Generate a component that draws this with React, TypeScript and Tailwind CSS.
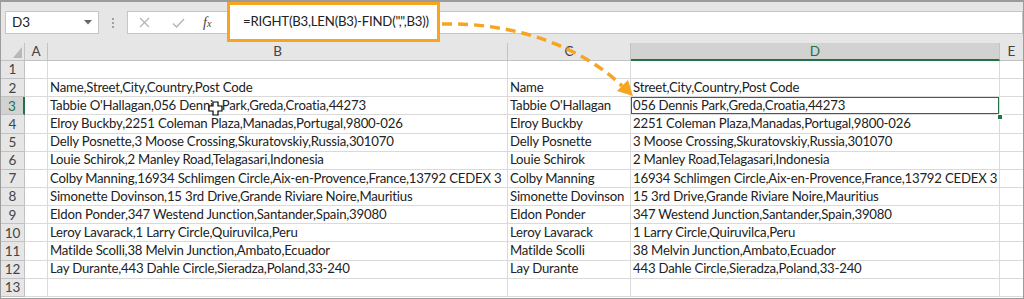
import React from "react";

const rows: string[] = [
  "",
  "Name,Street,City,Country,Post Code",
  "Tabbie O'Hallagan,056 Dennis Park,Greda,Croatia,44273",
  "Elroy Buckby,2251 Coleman Plaza,Manadas,Portugal,9800-026",
  "Delly Posnette,3 Moose Crossing,Skuratovskiy,Russia,301070",
  "Louie Schirok,2 Manley Road,Telagasari,Indonesia",
  "Colby Manning,16934 Schlimgen Circle,Aix-en-Provence,France,13792 CEDEX 3",
  "Simonette Dovinson,15 3rd Drive,Grande Riviare Noire,Mauritius",
  "Eldon Ponder,347 Westend Junction,Santander,Spain,39080",
  "Leroy Lavarack,1 Larry Circle,Quiruvilca,Peru",
  "Matilde Scolli,38 Melvin Junction,Ambato,Ecuador",
  "Lay Durante,443 Dahle Circle,Sieradza,Poland,33-240",
  "",
];

const splitFirst = (s: string) => {
  const i = s.indexOf(",");
  if (i < 0) return [s, ""];
  return [s.slice(0, i), s.slice(i + 1)];
};

const font = { fontFamily: "Lato, 'Open Sans', sans-serif" };

const Cursor = () => (
  <svg className="absolute left-[207px] top-[99px]" width="15" height="15" viewBox="0 0 15 15">
    <path
      d="M5 1h5v4h4v5h-4v4H5v-4H1V5h4z"
      fill="#fff"
      stroke="#000"
      strokeWidth="1.2"
    />
  </svg>
);

const Arrow = () => (
  <svg className="absolute left-0 top-0 pointer-events-none" width="1024" height="299">
    <path
      d="M441 22 C 515 20, 582 46, 621 84"
      fill="none"
      stroke="#f5a51f"
      strokeWidth="3.5"
      strokeDasharray="10 6"
    />
    <polygon points="632,94 616,89 627,78" fill="#f5a51f" />
  </svg>
);

const Toolbar = () => (
  <div className="h-[41px] bg-[#e6e6e6] flex items-center relative">
    {/* NAME BOX */}
    <div className="ml-[4px] w-[94px] h-[23px] bg-white border border-[#c6c6c6] flex items-center justify-between px-[6px]">
      <span className="text-[13.5px] text-[#222]">D3</span>
      <svg width="8" height="5" viewBox="0 0 8 5">
        <path d="M0 0h8L4 4.5z" fill="#666" />
      </svg>
    </div>
    {/* DOTS */}
    <div className="w-[28px] flex flex-col items-center gap-[2px]">
      <span className="w-[2px] h-[2px] bg-[#a0a0a0]" />
      <span className="w-[2px] h-[2px] bg-[#a0a0a0]" />
      <span className="w-[2px] h-[2px] bg-[#a0a0a0]" />
    </div>
    {/* FX GROUP */}
    <div className="w-[100px] h-[23px] bg-white border border-r-0 border-[#c6c6c6] flex items-center">
      <svg className="ml-[11px]" width="11" height="11" viewBox="0 0 11 11">
        <path d="M1 1l9 9M10 1l-9 9" stroke="#b4b4b4" strokeWidth="1.3" />
      </svg>
      <svg className="ml-[22px]" width="13" height="10" viewBox="0 0 13 10">
        <path d="M1 5.5l3.5 3.5L12 1" fill="none" stroke="#b4b4b4" strokeWidth="1.4" />
      </svg>
      <span
        className="ml-[18px] text-[14px] italic text-[#444]"
        style={{ fontFamily: "'Liberation Serif', serif" }}
      >
        f<span className="text-[10px]">x</span>
      </span>
    </div>
    {/* HIGHLIGHTED FORMULA */}
    <div className="w-[213px] h-[40px] self-start border-[3px] border-[#f5a51f] bg-white flex items-center pl-[13px]">
      <span className="text-[13.2px] tracking-[-0.2px] text-[#222] whitespace-nowrap">
        =RIGHT(B3,LEN(B3)-FIND(",",B3))
      </span>
    </div>
    <div className="flex-1 h-[23px] bg-white border border-l-0 border-[#c6c6c6]" />
  </div>
);

const HeaderRow = () => {
  const cols = [
    { l: "A", w: "w-[23px]" },
    { l: "B", w: "w-[460px]" },
    { l: "C", w: "w-[123px]" },
    { l: "D", w: "w-[369px]", sel: true },
  ];
  return (
    <div className="flex h-[18px] bg-[#e6e6e6]">
      <div className="w-[24px] h-full border-r border-b border-[#c2c2c2] relative">
        <svg className="absolute right-[2px] bottom-[2px]" width="9" height="11" viewBox="0 0 9 11">
          <path d="M9 0v11H0z" fill="#b8b8b8" />
        </svg>
      </div>
      {cols.map((c) => (
        <div
          key={c.l}
          className={
            c.sel
              ? `${c.w} h-full bg-[#d2d2d2] border-r border-[#c2c2c2] border-b-2 border-b-[#217346] flex items-center justify-center text-[13.5px] text-[#217346]`
              : `${c.w} h-full border-r border-b border-[#c2c2c2] flex items-center justify-center text-[13.5px] text-[#444]`
          }
        >
          {c.l}
        </div>
      ))}
      <div className="flex-1 h-full border-b border-[#c2c2c2] flex items-center justify-center text-[13.5px] text-[#444]">
        E
      </div>
    </div>
  );
};

const Row = ({ n, text }: { n: number; text: string }) => {
  const [name, rest] = splitFirst(text);
  const sel = n === 3;
  const cell = "h-full border-r border-b border-[#dadada] overflow-hidden whitespace-nowrap flex items-center px-[2px] text-[13.2px] tracking-[-0.2px] text-[#222]";
  return (
    <div className="flex h-[18.15px]">
      <div
        className={
          sel
            ? "w-[24px] h-full bg-[#d2d2d2] border-b border-[#c2c2c2] border-r-2 border-r-[#217346] flex items-center justify-center text-[13.5px] text-[#217346]"
            : "w-[24px] h-full bg-[#e6e6e6] border-r border-b border-[#c2c2c2] flex items-center justify-center text-[13.5px] text-[#444]"
        }
      >
        {n}
      </div>
      <div className={`w-[23px] ${cell}`} />
      <div className={`w-[460px] ${cell}`}>{text}</div>
      <div className={`w-[123px] ${cell}`}>{text ? name : ""}</div>
      <div className={`w-[369px] ${cell} relative`}>
        {text ? rest : ""}
        {sel && (
          <div className="absolute inset-[-1px] border-2 border-[#217346] pointer-events-none" />
        )}
      </div>
      <div className="flex-1 h-full border-b border-[#dadada]" />
    </div>
  );
};

export default function App() {
  return (
    <div
      className="w-[1024px] h-[299px] relative overflow-hidden bg-white border border-t-2 border-[#9c9c9c]"
      style={font}
    >
      <Toolbar />
      <HeaderRow />
      {rows.map((r, i) => (
        <Row key={i} n={i + 1} text={r} />
      ))}
      {/* FILL HANDLE */}
      <div className="absolute left-[996px] top-[112px] w-[6px] h-[6px] bg-[#217346] border border-white" />
      <Cursor />
      <Arrow />
    </div>
  );
}
